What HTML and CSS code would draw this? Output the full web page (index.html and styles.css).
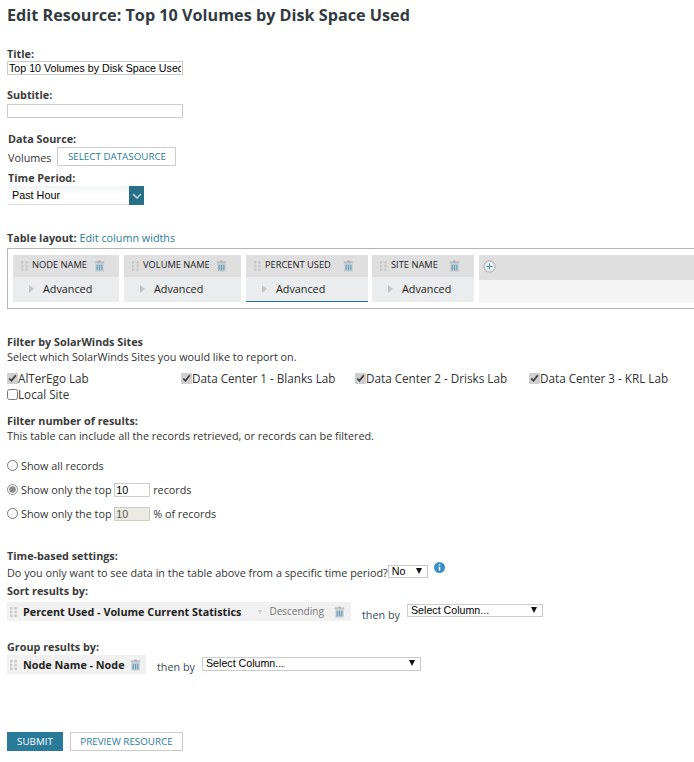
FILE: index.html
```html
<!DOCTYPE html>
<html lang="en">
<head>
<meta charset="utf-8">
<title>Edit Resource</title>
<link rel="stylesheet" href="styles.css">
</head>
<body>
<svg class="defs" width="0" height="0" aria-hidden="true">
  <symbol id="trash" viewBox="0 0 12 13">
    <path d="M4.5 1.5 L5 .5 H7 L7.5 1.5 M.5 3 L1 1.7 H11 L11.5 3 Z" fill="#a9b1b5"/>
    <path d="M1.5 3.5 H10.5 V12.5 H1.5 Z" fill="#c3c9cc"/>
    <path d="M3.5 5.5 V11 M6 5.5 V11 M8.5 5.5 V11" stroke="#5da3c0" stroke-width="1.2" fill="none"/>
  </symbol>
  <symbol id="grip" viewBox="0 0 7 10">
    <path d="M0 0h2.4v2.4H0zM4.4 0h2.4v2.4H4.4zM0 3.8h2.4v2.4H0zM4.4 3.8h2.4v2.4H4.4zM0 7.6h2.4V10H0zM4.4 7.6h2.4V10H4.4z" fill="#c8c8c8"/>
  </symbol>
</svg>
<h1 class="page-title">Edit Resource: Top 10 Volumes by Disk Space Used</h1>

<label class="label title-label">Title:</label>
<input class="text-input" type="text" value="Top 10 Volumes by Disk Space Used">
<label class="label subtitle-label">Subtitle:</label>
<input class="text-input" type="text" value="">

<div class="source">
  <div class="label">Data Source:</div>
  <div class="source-row"><span class="volumes">Volumes</span><button class="btn btn-ds">SELECT DATASOURCE</button></div>
  <div class="label period-label">Time Period:</div>
  <div class="period-select">
    <span class="period-value">Past Hour</span>
    <span class="period-arrow"><svg width="10" height="6" viewBox="0 0 10 6"><path d="M1 1 L5 5 L9 1" fill="none" stroke="#bfd6df" stroke-width="1.6"/></svg></span>
  </div>
</div>

<div class="layout-head"><b>Table layout:</b> <a class="link">Edit column widths</a></div>
<div class="layout-box">
  <div class="col col-1">
    <div class="col-head"><svg class="grip"><use href="#grip"/></svg><span class="col-name">NODE NAME</span><svg class="trash"><use href="#trash"/></svg></div>
    <div class="col-body"><span class="tri"></span>Advanced</div>
  </div>
  <div class="col col-2">
    <div class="col-head"><svg class="grip"><use href="#grip"/></svg><span class="col-name">VOLUME NAME</span><svg class="trash"><use href="#trash"/></svg></div>
    <div class="col-body"><span class="tri"></span>Advanced</div>
  </div>
  <div class="col col-3 col-active">
    <div class="col-head"><svg class="grip"><use href="#grip"/></svg><span class="col-name">PERCENT USED</span><svg class="trash"><use href="#trash"/></svg></div>
    <div class="col-body"><span class="tri"></span>Advanced</div>
  </div>
  <div class="col col-4">
    <div class="col-head"><svg class="grip"><use href="#grip"/></svg><span class="col-name">SITE NAME</span><svg class="trash"><use href="#trash"/></svg></div>
    <div class="col-body"><span class="tri"></span>Advanced</div>
  </div>
  <div class="col-add">
    <div class="add-head"><svg width="13" height="13" viewBox="0 0 13 13"><circle cx="6.5" cy="6.5" r="5.6" fill="#eee" stroke="#a8a8a8"/><path d="M6.5 3.5v6M3.5 6.5h6" stroke="#4a9cbc" stroke-width="1"/></svg></div>
    <div class="add-body"></div>
  </div>
</div>

<h2 class="sec-title sites-title">Filter by SolarWinds Sites</h2>
<p class="sec-text">Select which SolarWinds Sites you would like to report on.</p>
<div class="sites">
  <label class="site"><input type="checkbox" checked>AlTerEgo Lab</label>
  <label class="site"><input type="checkbox" checked>Data Center 1 - Blanks Lab</label>
  <label class="site"><input type="checkbox" checked>Data Center 2 - Drisks Lab</label>
  <label class="site"><input type="checkbox" checked>Data Center 3 - KRL Lab</label>
  <label class="site"><input type="checkbox">Local Site</label>
</div>

<h2 class="sec-title number-title">Filter number of results:</h2>
<p class="sec-text">This table can include all the records retrieved, or records can be filtered.</p>
<div class="radios">
  <label class="radio"><input type="radio" name="n">Show all records</label>
  <label class="radio"><input type="radio" name="n" checked>Show only the top <input class="num" type="text" value="10"> records</label>
  <label class="radio"><input type="radio" name="n">Show only the top <input class="num num-off" type="text" value="10" disabled> % of records</label>
</div>

<h2 class="sec-title time-title">Time-based settings:</h2>
<div class="time-row">
  <span>Do you only want to see data in the table above from a specific time period?</span><span class="sel sel-no">No<i class="caret"></i></span>
  <svg class="info" width="11" height="11" viewBox="0 0 11 11"><circle cx="5.5" cy="5.5" r="5.5" fill="#3b8fc8"/><path d="M5.5 2.2v1.3M5.5 4.8v3.8" stroke="#fff" stroke-width="1.5"/></svg>
</div>

<h2 class="sec-title sort-title">Sort results by:</h2>
<div class="sort-row">
  <div class="pill pill-sort">
    <svg class="grip"><use href="#grip"/></svg><b>Percent Used - Volume Current Statistics</b>
    <i class="mini-caret"></i><span class="desc">Descending</span><svg class="trash"><use href="#trash"/></svg>
  </div>
  <span class="then">then by</span>
  <span class="sel sel-sort">Select Column...<i class="caret"></i></span>
</div>

<h2 class="sec-title group-title">Group results by:</h2>
<div class="sort-row group-row">
  <div class="pill pill-group">
    <svg class="grip"><use href="#grip"/></svg><b>Node Name - Node</b><svg class="trash"><use href="#trash"/></svg>
  </div>
  <span class="then">then by</span>
  <span class="sel sel-group">Select Column...<i class="caret"></i></span>
</div>

<div class="actions">
  <button class="btn btn-submit">SUBMIT</button>
  <button class="btn btn-preview">PREVIEW RESOURCE</button>
</div>
</body>
</html>
```
FILE: styles.css
```css
* { box-sizing: border-box; }
html, body { margin: 0; }
body {
  width: 694px;
  height: 762px;
  overflow: hidden;
  padding: 6px 0 0 7px;
  background: #fff;
  color: #333;
  font: 10.8px/15px "Open Sans", sans-serif;
}
.defs { position: absolute; }
.page-title {
  margin: 0;
  font: 700 16.2px/18px "Open Sans", sans-serif;
  color: #333a40;
}
.label { display: block; font-weight: 700; line-height: 14px; color: #3b3b3b; }
.title-label { margin-top: 23px; }
.subtitle-label { margin-top: 13px; }
.text-input {
  display: block;
  width: 176px;
  height: 14px;
  padding: 0 1px;
  border: 1px solid #ccc;
  font: 10.67px/12px "Liberation Sans", sans-serif;
  color: #000;
  outline: none;
}
.subtitle-label + .text-input { margin-top: 2px; }
.source { margin: 14px 0 0 1px; }
.source-row { display: flex; align-items: center; gap: 6px; height: 19px; margin-top: 1px; }
.volumes { position: relative; top: 1px; }
.btn {
  font-family: "Open Sans", sans-serif;
  font-size: 9.8px;
  padding: 0;
  border-radius: 0;
  cursor: pointer;
}
.btn-ds {
  width: 119px;
  height: 19px;
  background: #fff;
  border: 1px solid #ccc;
  color: #2b7a99;
}
.period-label { margin-top: 5px; }
.period-select {
  display: flex;
  justify-content: space-between;
  width: 136px;
  height: 19px;
  margin-top: 1px;
  border-bottom: 1px solid #ddd;
  background: linear-gradient(#f2f4f5, #fff 50%);
  font: 10.8px/18px "Liberation Sans", sans-serif;
  color: #000;
}
.period-value { padding-left: 4px; }
.period-arrow {
  display: flex;
  align-items: center;
  justify-content: center;
  width: 15px;
  height: 19px;
  background: #266f87;
}
.layout-head { margin-top: 25px; height: 15px; color: #3b3b3b; }
.link { color: #2b7a99; }
.layout-box {
  display: flex;
  gap: 5px;
  width: 700px;
  height: 61px;
  margin-top: 3px;
  padding: 6px 0 0 5px;
  border: 1px solid #b5b5b5;
}
.col { height: 47px; background: #ebeced; }
.col-1 { width: 106px; }
.col-2 { width: 117px; }
.col-3 { width: 122px; margin-right: -1px; }
.col-4 { width: 102px; }
.col-active { border-bottom: 1px solid #266f87; }
.col-head {
  display: flex;
  align-items: center;
  height: 22px;
  padding: 0 14px 0 8px;
  background: #dfdfdf;
  color: #222;
  font-size: 9.3px;
}
.grip { width: 7px; height: 10px; flex: none; }
.col-name { margin-left: 4px; white-space: nowrap; position: relative; top: -2px; }
.col-head .trash { margin-left: auto; }
.trash { width: 11px; height: 12px; flex: none; }
.col-body {
  display: flex;
  align-items: center;
  height: 25px;
  padding: 0 0 2px 16px;
  color: #222;
}
.tri {
  width: 0;
  height: 0;
  margin-right: 9px;
  border-left: 5px solid #c5c5c5;
  border-top: 4px solid transparent;
  border-bottom: 4px solid transparent;
}
.col-add { flex: 1; }
.add-head {
  height: 25px;
  padding: 5px 0 0 4px;
  background: #dfdfdf;
}
.add-body { height: 23px; background: #f4f4f4; }
.sec-title {
  margin: 0;
  font: 700 10.8px/15px "Open Sans", sans-serif;
  color: #3b3b3b;
}
.sec-text { margin: 0; }
.sites-title { margin-top: 25px; }
.sites { display: grid; grid-template-columns: 174px 174px 174px 1fr; margin-top: 6px; line-height: 16px; font-size: 11.7px; }
.site { display: flex; align-items: center; height: 16px; white-space: nowrap; }
.site input { width: 11px; height: 11px; margin: 0; accent-color: #cfcfcf; }
.number-title { margin-top: 11px; }
.radios { margin-top: 15px; }
.radio { display: flex; align-items: center; height: 15px; margin-bottom: 9px; white-space: pre; }
.radio input[type=radio] { width: 11px; height: 11px; margin: 0 3px 0 0; accent-color: #8a8a8a; }
.num {
  width: 36px;
  height: 14px;
  margin: 0;
  padding: 0 1px;
  border: 1px solid #ccc;
  font: 10.67px/12px "Liberation Sans", sans-serif;
  color: #000;
}
.num-off { background: #ebebe4; color: #555; }
.time-title { margin-top: 27px; }
.time-row { display: flex; align-items: flex-start; height: 17px; margin-top: 2px; }
.sel {
  position: relative;
  display: block;
  height: 13px;
  border: 1px solid #ccc;
  background: #fff;
  font: 10.67px/11px "Liberation Sans", sans-serif;
  color: #000;
  padding-left: 3px;
}
.caret {
  position: absolute;
  right: 5px;
  top: 2px;
  border-top: 6px solid #111;
  border-left: 3.5px solid transparent;
  border-right: 3.5px solid transparent;
}
.sel-no { width: 40px; }
.info { margin: -3px 0 0 6px; }
.sort-title { margin-top: 2px; height: 14px; line-height: 14px; }
.sort-row { display: flex; align-items: flex-start; margin-top: 4px; }
.group-row { margin-top: 1px; }
.pill {
  display: flex;
  align-items: center;
  height: 19px;
  padding-left: 3px;
  background: #f1f1f1;
  color: #222;
}
.pill b { margin-left: 6px; white-space: nowrap; }
.pill-sort { width: 344px; }
.pill-group { width: 139px; }
.pill-group .trash { margin-left: 5px; }
.mini-caret {
  margin-left: 17px;
  border-top: 4px solid #c8c8c8;
  border-left: 2.5px solid transparent;
  border-right: 2.5px solid transparent;
}
.desc { margin-left: 7px; color: #777; font-size: 10px; }
.pill-sort .trash { margin-left: 10px; }
.then { margin: 5px 0 0 11px; color: #3b4a55; }
.group-row .then { margin-top: 4px; }
.sel-sort { width: 136px; margin: 2px 0 0 7px; }
.sel-group { width: 219px; height: 14px; margin: 2px 0 0 7px; }
.group-title { margin-top: 18px; height: 14px; line-height: 14px; }
.actions { display: flex; gap: 7px; margin-top: 58px; }
.btn-submit {
  width: 56px;
  height: 19px;
  background: #2a7a9a;
  border: 0;
  color: #fff;
}
.btn-preview {
  width: 113px;
  height: 19px;
  background: #fff;
  border: 1px solid #ccc;
  color: #2b7a99;
}
```
